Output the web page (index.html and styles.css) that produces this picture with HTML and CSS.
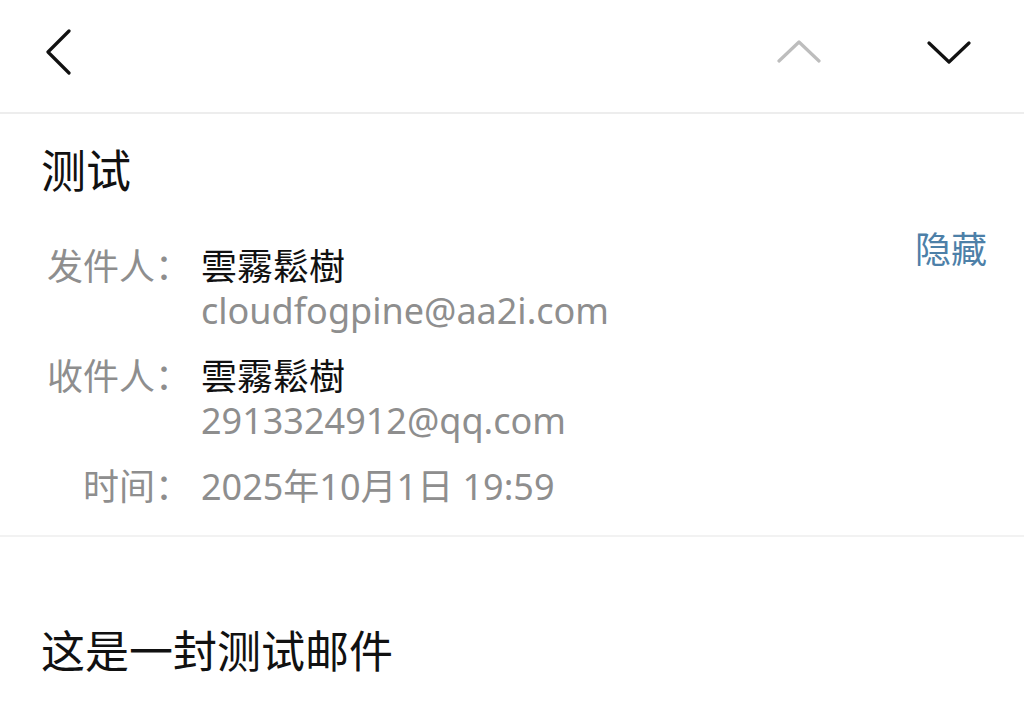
FILE: index.html
```html
<!DOCTYPE html>
<html lang="zh-CN">
<head>
<meta charset="utf-8">
<title>测试</title>
<link rel="stylesheet" href="styles.css">
</head>
<body>
<div class="page">
  <header class="topbar">
    <svg class="icon back" width="26" height="46" viewBox="0 0 26 46"><polyline points="23,2 2,23 23,44" fill="none" stroke="#111" stroke-width="3.2" stroke-linecap="round" stroke-linejoin="round"/></svg>
    <div class="nav">
      <svg class="icon up" width="44" height="24" viewBox="0 0 44 24"><polyline points="2,21 22,2 42,21" fill="none" stroke="#bdbdbd" stroke-width="3.2" stroke-linecap="round" stroke-linejoin="round"/></svg>
      <svg class="icon down" width="44" height="24" viewBox="0 0 44 24"><polyline points="2,3 22,22 42,3" fill="none" stroke="#111" stroke-width="3.2" stroke-linecap="round" stroke-linejoin="round"/></svg>
    </div>
  </header>
  <section class="meta">
    <h1 class="subject">测试</h1>
    <div class="details">
      <div class="rows">
        <div class="row">
          <span class="label">发件人：</span>
          <div class="value">
            <div class="name">雲霧鬆樹</div>
            <div class="addr">cloudfogpine@aa2i.com</div>
          </div>
        </div>
        <div class="row">
          <span class="label">收件人：</span>
          <div class="value">
            <div class="name">雲霧鬆樹</div>
            <div class="addr">2913324912@qq.com</div>
          </div>
        </div>
        <div class="row">
          <span class="label">时间：</span>
          <div class="value">
            <div class="addr">2025年10月1日 19:59</div>
          </div>
        </div>
      </div>
      <a class="hide">隐藏</a>
    </div>
  </section>
  <main class="body">
    <p class="content">这是一封测试邮件</p>
  </main>
</div>
</body>
</html>
```

FILE: styles.css
```css
* { box-sizing: border-box; }
html, body { margin: 0; padding: 0; background: #fff; }
body {
  font-family: "Noto Sans", "Noto Sans CJK SC", sans-serif;
  color: #111;
  width: 1024px;
  height: 727px;
  overflow: hidden;
}
.topbar {
  height: 114px;
  border-bottom: 2px solid #ededed;
  display: flex;
  align-items: flex-start;
  justify-content: space-between;
  padding: 29px 53px 0 46px;
}
.icon { display: block; }
.nav {
  display: flex;
  gap: 106px;
  padding-top: 11px;
}
.meta {
  border-bottom: 2px solid #f2f2f2;
  padding: 27px 37px 0 41px;
  height: 423px;
}
.subject {
  margin: 0;
  font-weight: 400;
  font-size: 45px;
  line-height: 60px;
}
.details {
  display: flex;
  justify-content: space-between;
  align-items: flex-start;
  margin-top: 44px;
}
.rows {
  display: flex;
  flex-direction: column;
  gap: 22px;
}
.row {
  display: flex;
  align-items: flex-start;
}
.label {
  flex: 0 0 160px;
  text-align: right;
  color: #8e8e8e;
  font-size: 36px;
  line-height: 44px;
  padding-right: 10px;
  white-space: nowrap;
}
.value { display: flex; flex-direction: column; }
.name {
  font-size: 36px;
  line-height: 44px;
  color: #111;
}
.addr {
  font-size: 36px;
  line-height: 44px;
  color: #8e8e8e;
}
.hide {
  color: #4d80a8;
  font-size: 36px;
  line-height: 44px;
  margin-top: -17px;
  cursor: pointer;
}
.body { padding: 84px 41px 0; }
.content {
  margin: 0;
  font-size: 44px;
  line-height: 60px;
}
```
